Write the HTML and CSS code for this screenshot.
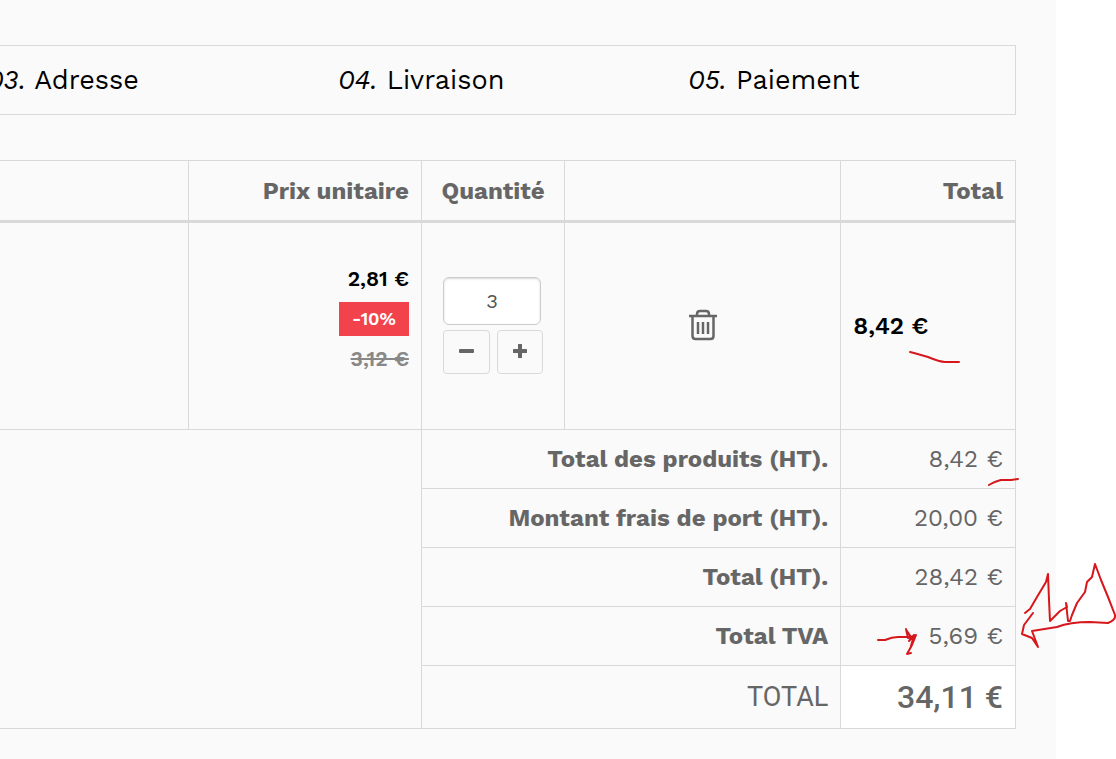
FILE: index.html
```html
<!DOCTYPE html>
<html lang="fr">
<head>
    <meta charset="UTF-8">
    <meta name="viewport" content="width=device-width, initial-scale=1.0">
    <title>Panier</title>
    <link rel="stylesheet" href="styles.css">
</head>
<body>

<main class="page">
    <!-- étapes de commande -->
    <ul class="steps">
        <li><em>03.</em> Adresse</li>
        <li><em>04.</em> Livraison</li>
        <li><em>05.</em> Paiement</li>
    </ul>

    <!-- panier -->
    <table class="cart">
        <colgroup>
            <col class="col-product">
            <col class="col-price">
            <col class="col-qty">
            <col class="col-delete">
            <col class="col-total">
        </colgroup>
        <thead>
            <tr>
                <th></th>
                <th>Prix unitaire</th>
                <th class="center">Quantité</th>
                <th></th>
                <th>Total</th>
            </tr>
        </thead>
        <tbody>
            <tr class="item">
                <td></td>
                <td>
                    <div class="price">
                        <strong>2,81 €</strong>
                        <span class="reduction">-10%</span>
                        <del>3,12 €</del>
                    </div>
                </td>
                <td>
                    <div class="qty">
                        <input type="text" value="3" aria-label="Quantité">
                        <div class="qty-buttons">
                            <button type="button" aria-label="Diminuer">
                                <svg width="16" height="18" viewBox="0 0 16 18"><rect x="1" y="6" width="15" height="4" rx="1"/></svg>
                            </button>
                            <button type="button" aria-label="Augmenter">
                                <svg width="16" height="18" viewBox="0 0 16 18"><path d="M1.500 6H6V1.500q0-.5.5-.5h3q.5 0 .5.5V6h4.500q.5 0 .5.5v3q0 .5-.5.5H10v4.500q0 .5-.5.5h-3q-.5 0-.5-.5V10H1.500q-.5 0-.5-.5v-3q0-.5.5-.5z"/></svg>
                            </button>
                        </div>
                    </div>
                </td>
                <td class="center">
                    <button class="delete" type="button" aria-label="Supprimer">
                        <svg width="30" height="32" viewBox="0 0 30 32">
                            <path d="M1 7h28M9 7V5q0-3 3-3h6q3 0 3 3v2M4.500 8v19q0 3 3 3h15q3 0 3-3V8"/>
                            <path d="M10 13v12M15 13v12M20 13v12"/>
                        </svg>
                    </button>
                </td>
                <td class="item-total">8,42 €</td>
            </tr>
        </tbody>
        <tfoot>
            <tr>
                <td colspan="2" rowspan="5"></td>
                <th colspan="2">Total des produits (HT).</th>
                <td>8,42 €</td>
            </tr>
            <tr>
                <th colspan="2">Montant frais de port (HT).</th>
                <td>20,00 €</td>
            </tr>
            <tr>
                <th colspan="2">Total (HT).</th>
                <td>28,42 €</td>
            </tr>
            <tr>
                <th colspan="2">Total TVA</th>
                <td>5,69 €</td>
            </tr>
            <tr class="grand-total">
                <th colspan="2">TOTAL</th>
                <td>34,11 €</td>
            </tr>
        </tfoot>
    </table>
</main>

<!-- annotations à main levée -->
<svg class="notes" width="1116" height="759" viewBox="0 0 1116 759" aria-hidden="true">
    <path d="M910 352L914 353L928 357Q940 362 945 362H959"/>
    <path d="M989 485Q996 481 1001 480L1011 480L1018 479"/>
    <path d="M878 640H885Q892 637 898 637H913M906 629L908 638L916 635L912 645L907 654L911 653M907 631L913 640M909 641L914 635L911 646"/>
    <path d="M1025 613L1030 609L1037 597L1046 582L1048 574L1049 600L1050 621L1060 611L1067 607L1066 603L1068 621L1070 621L1072 615L1077 603L1085 592L1087 582L1092 577L1095 564L1101 580L1108 597L1115 615Q1116 620 1108 623L1090 622Q1070 622 1057 627L1032 631L1038 647L1032 638L1022 634L1024 625L1033 613"/>
</svg>

</body>
</html>
```
FILE: styles.css
```css
* {
    box-sizing: border-box;
}
body {
    margin: 0;
    position: relative;
    overflow-x: hidden;
    background-color: #fff;
    color: #666;
    font-family: "Work Sans", Inter, sans-serif;
    font-size: 24px;
    line-height: 30px;
}
.page {
    min-height: 100vh;
    margin-right: 60px;
    padding: 45px 40px 30px 0;
    background-color: #fafafa;
}
.steps {
    display: grid;
    grid-template-columns: 351fr 350fr 327fr;
    margin: 0 0 45px -14px;
    padding: 0;
    border: 1px solid #d9d9d9;
    list-style: none;
    color: #000;
    font-size: 27px;
    line-height: 68px;
}
.cart {
    width: 100%;
    table-layout: fixed;
    border-collapse: collapse;
}
.col-product {
    width: 18.6%;
}
.col-price {
    width: 22.9%;
}
.col-qty {
    width: 14.1%;
}
.col-delete {
    width: 27.2%;
}
.cart th, .cart td {
    padding: 14px 12px;
    border: 1px solid #d9d9d9;
    text-align: right;
    vertical-align: middle;
}
.cart tr > :first-child:not(th[colspan]) {
    border-left: 0;
}
.cart thead th {
    padding: 15px 12px 14px;
    border-bottom: 3px solid #d9d9d9;
    white-space: nowrap;
}
.cart .center {
    text-align: center;
}
.cart .item td {
    height: 208px;
}
.price {
    display: flex;
    flex-direction: column;
    align-items: flex-end;
    gap: 8px;
    margin-bottom: 14px;
    font-size: 21px;
    font-weight: 600;
}
.price strong {
    color: #000;
    font-weight: 600;
}
.price del {
    color: #888;
}
.reduction {
    padding: 2px 13px;
    background-color: #f2434d;
    color: #fff;
    font-size: 18px;
}
.qty {
    display: grid;
    gap: 5px;
    width: 100px;
    margin: 0 auto 2px;
}
.qty input {
    width: 98px;
    height: 48px;
    border: 1px solid #ccc;
    border-radius: 6px;
    background-color: #fff;
    box-shadow: inset 0 1px 2px rgba(0, 0, 0, 0.15);
    color: #555;
    font-family: inherit;
    font-size: 20px;
    text-align: center;
}
.qty-buttons {
    display: grid;
    grid-template-columns: 1fr 1fr;
    gap: 7px;
}
.qty-buttons button {
    display: flex;
    justify-content: center;
    align-items: center;
    height: 44px;
    padding: 0;
    border: 1px solid #d9d9d9;
    border-radius: 4px;
    background-color: #fafafa;
    fill: #666;
}
.delete {
    padding: 0 0 2px;
    border: 0;
    background: none;
    vertical-align: middle;
}
.delete svg {
    display: block;
    fill: none;
    stroke: #666;
    stroke-width: 2.5;
}
.cart .item-total {
    color: #000;
    font-weight: 600;
    text-align: left;
}
.cart .grand-total th, .cart .grand-total td {
    padding: 16px 12px;
    font-family: Roboto, sans-serif;
}
.cart .grand-total th {
    font-size: 27px;
    font-weight: 400;
}
.cart .grand-total td {
    background-color: #fff;
    font-size: 32px;
    font-weight: 500;
}
.notes {
    position: absolute;
    top: 0;
    left: 0;
    fill: none;
    stroke: #d6171c;
    stroke-width: 2;
    stroke-linecap: round;
    stroke-linejoin: round;
    pointer-events: none;
}
```
